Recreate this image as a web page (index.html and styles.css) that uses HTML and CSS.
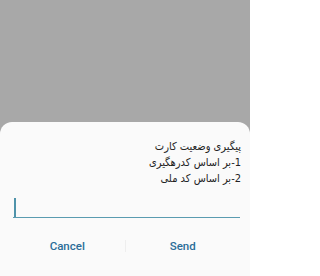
FILE: index.html
```html
<!DOCTYPE html>
<html lang="fa">
<head>
<meta charset="utf-8">
<link rel="stylesheet" href="styles.css">
</head>
<body>
<div class="screen">
  <div class="scrim"></div>
  <div class="sheet">
    <div class="message" dir="rtl">
      <div>پیگیری وضعیت کارت</div>
      <div>1-بر اساس کدرهگیری</div>
      <div>2-بر اساس کد ملی</div>
    </div>
    <div class="field"><span class="cursor"></span></div>
    <div class="actions">
      <button class="btn">Cancel</button>
      <span class="divider"></span>
      <button class="btn">Send</button>
    </div>
  </div>
</div>
</body>
</html>
```

FILE: styles.css
```css
html, body {
  margin: 0;
  padding: 0;
}
body {
  width: 250px;
  height: 276px;
  overflow: hidden;
  font-family: Roboto, "DejaVu Sans", sans-serif;
}
.screen {
  display: flex;
  flex-direction: column;
  height: 276px;
  background: #a8a8a8;
}
.scrim {
  height: 122px;
  flex: none;
}
.sheet {
  flex: 1;
  background: #fafafa;
  border-radius: 12px 12px 0 0;
  display: flex;
  flex-direction: column;
}
.message {
  padding: 17px 9px 0 0;
  font-family: "DejaVu Sans Condensed", "DejaVu Sans", sans-serif;
  font-stretch: condensed;
  font-size: 11px;
  line-height: 16px;
  color: #222222;
  text-align: right;
}
.field {
  margin: 11px 10px 0 13px;
  height: 19px;
  border-bottom: 1.5px solid #5a9bb0;
  display: flex;
  align-items: stretch;
}
.cursor {
  width: 1.5px;
  margin-left: 1px;
  background: #4f93aa;
}
.actions {
  display: flex;
  align-items: center;
  margin: 18px 10px 0 10px;
  height: 20px;
}
.btn {
  flex: 1;
  border: 0;
  background: none;
  padding: 0;
  font-family: Roboto, sans-serif;
  font-weight: 500;
  font-size: 11.5px;
  color: #2b6d98;
}
.divider {
  width: 1px;
  height: 12px;
  background: #eeeeee;
}
```
